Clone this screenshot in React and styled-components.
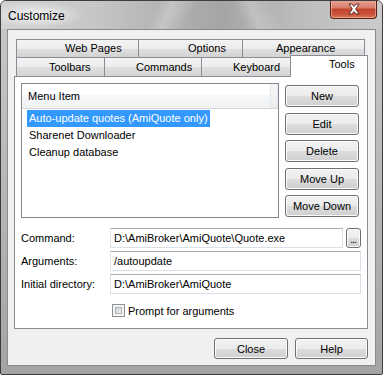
import React from 'react';
import styled, { createGlobalStyle } from 'styled-components';

const Global = createGlobalStyle`
    html, body {
        margin: 0;
        padding: 0;
        background: #ffffff;
    }
    body {
        font-family: "Liberation Sans", Arial, sans-serif;
        font-size: 11px;
        color: #000;
    }
    * { box-sizing: border-box; }
`

const Window = styled.div`
    width: 383px;
    height: 375px;
    border: 1px solid #3e3e3e;
    border-radius: 6px 6px 2px 2px;
    background: linear-gradient(#c9c9c9, #b3b3b3 60%, #a4a4a4);
    display: flex;
    flex-direction: column;
    overflow: hidden;
`

const TitleBar = styled.div`
    height: 28px;
    flex: none;
    display: flex;
    justify-content: space-between;
    padding-left: 7px;
    background:
        radial-gradient(ellipse 48px 13px at 36px 14px, rgba(255,255,255,0.75), rgba(255,255,255,0) 100%),
        linear-gradient(115deg, rgba(255,255,255,0) 40%, rgba(255,255,255,0.25) 44%, rgba(255,255,255,0) 50%),
        linear-gradient(65deg, rgba(255,255,255,0) 62%, rgba(255,255,255,0.22) 66%, rgba(255,255,255,0) 72%),
        linear-gradient(to right, #d2d2d2 0%, #c6c6c6 25%, #b0b0b0 45%, #a5a5a5 58%, #bcbcbc 78%, #cbcbcb 100%);
`

const Title = styled.div`
    align-self: center;
    font-size: 12px;
    line-height: 16px;
    padding-top: 1px;
`

const CloseButton = styled.div`
    width: 47px;
    height: 19px;
    margin-top: -1px;
    margin-right: 5px;
    border: 1px solid #5a1f15;
    border-top: none;
    border-radius: 0 0 4px 4px;
    background: linear-gradient(#e8a797 0%, #d77a66 45%, #c2432e 50%, #c9553c 80%, #d97a52 100%);
    box-shadow: inset 0 0 0 1px rgba(255,220,210,0.45);
    display: flex;
    align-items: center;
    justify-content: center;
`

const Client = styled.div`
    flex: 1;
    margin: 0 6px 8px 6px;
    border: 1px solid #8a8a8a;
    background: #f0f0f0;
    padding: 9px 7px 6px 6px;
    display: flex;
    flex-direction: column;
`

const TabRow = styled.div`
    display: flex;
    align-items: flex-end;
    height: ${p => p.$h}px;
    padding-left: 2px;
`

const Tab = styled.div`
    width: ${p => p.$w}px;
    height: ${p => p.$h}px;
    margin-left: ${p => p.$first ? 0 : -1}px;
    padding-left: ${p => p.$pad}px;
    border: 1px solid #898c95;
    border-bottom: none;
    background: linear-gradient(#f4f4f4 0%, #ececec 50%, #e0e0e0 50%, #d3d3d3 100%);
    line-height: ${p => p.$h - 1}px;
    white-space: nowrap;
`

const ActiveTab = styled(Tab)`
    position: relative;
    z-index: 2;
    margin-bottom: -1px;
    background: #ffffff;
    line-height: 17px;
`

const Panel = styled.div`
    height: 253px;
    flex: none;
    border: 1px solid #898c95;
    background: #ffffff;
    padding: 6px 6px 0 6px;
    display: flex;
    flex-direction: column;
`

const TopArea = styled.div`
    display: flex;
    gap: 6px;
`

const ListView = styled.div`
    width: 258px;
    height: 135px;
    border: 1px solid #828790;
    background: #fff;
`

const Header = styled.div`
    height: 25px;
    display: flex;
    border-bottom: 1px solid #d5d5d5;
    background: linear-gradient(#ffffff 0%, #ffffff 45%, #f6f7f9 45%, #f1f2f4 100%);
`

const HeaderCell = styled.div`
    width: ${p => p.$w}px;
    padding-left: 6px;
    line-height: 25px;
    border-right: 1px solid #e3e8ee;
`

const HeaderFill = styled.div`
    flex: 1;
    background: linear-gradient(#f8f8f8, #ececec);
    border-right: 1px solid #e3e8ee;
`

const Rows = styled.div`
    padding-top: 1px;
`

const Row = styled.div`
    height: 17px;
    padding-left: 5px;
`

const RowLabel = styled.span`
    display: inline-block;
    height: 17px;
    line-height: 17px;
    padding: 0 2px;
    background: ${p => p.$selected ? '#3399ff' : 'transparent'};
    color: ${p => p.$selected ? '#ffffff' : '#000000'};
`

const ButtonColumn = styled.div`
    display: flex;
    flex-direction: column;
    gap: 5.5px;
    padding-top: 2px;
`

const Button = styled.div`
    width: ${p => p.$w || 74}px;
    height: ${p => p.$h || 22}px;
    border: 1px solid #707070;
    border-radius: 3px;
    background: linear-gradient(#f2f2f2 0%, #ebebeb 50%, #dddddd 50%, #cfcfcf 100%);
    box-shadow: inset 0 0 0 1px #fbfbfb;
    display: flex;
    align-items: center;
    justify-content: center;
    white-space: nowrap;
`

const Form = styled.div`
    margin-top: 10px;
    display: grid;
    grid-template-columns: 89px 1fr;
    grid-auto-rows: 20px;
    row-gap: 3px;
    align-items: center;
`

const FieldLabel = styled.div`
    line-height: 20px;
    white-space: nowrap;
`

const FieldLine = styled.div`
    display: flex;
    gap: 3px;
`

const Input = styled.div`
    flex: 1;
    height: 20px;
    border: 1px solid #dbdfe6;
    border-top-color: #abadb3;
    border-left-color: #e2e3ea;
    padding-left: 3px;
    line-height: 18px;
    white-space: nowrap;
    overflow: hidden;
`

const BrowseButton = styled(Button)`
    align-items: flex-end;
    line-height: 14px;
    font-size: 10px;
    letter-spacing: -1px;
    padding-right: 1px;
`

const CheckLine = styled.div`
    margin-top: 10px;
    margin-left: 91px;
    display: flex;
    align-items: center;
    gap: 3px;
    height: 13px;
`

const CheckBox = styled.span`
    width: 13px;
    height: 13px;
    border: 1px solid #8e8f8f;
    background: #f4f4f4;
    padding: 2px;
    display: block;
`

const CheckInner = styled.span`
    display: block;
    width: 7px;
    height: 7px;
    background: linear-gradient(135deg, #cbcfd5, #f0f1f2);
    border: 1px solid #aeb3b9;
`

const Footer = styled.div`
    margin-top: 9px;
    display: flex;
    justify-content: flex-end;
    gap: 7px;
`

function CloseGlyph() {
    return (
        <svg width="14" height="12" viewBox="0 0 14 12">
            <path d="M2 1 L5 1 L7 3.5 L9 1 L12 1 L8.7 6 L12 11 L9 11 L7 8.5 L5 11 L2 11 L5.3 6 Z"
                fill="#ffffff" stroke="#4a1a12" strokeWidth="0.9" strokeLinejoin="round" />
        </svg>
    );
}

export default function App() {
    return (
        <>
            <Global />
            <Window>
                <TitleBar>
                    <Title>Customize</Title>
                    <CloseButton><CloseGlyph /></CloseButton>
                </TitleBar>
                <Client>
                    <TabRow $h={18}>
                        <Tab $first $w={123} $h={18} $pad={48}>Web Pages</Tab>
                        <Tab $w={105} $h={18} $pad={49}>Options</Tab>
                        <Tab $w={123} $h={18} $pad={33}>Appearance</Tab>
                    </TabRow>
                    <TabRow $h={19}>
                        <Tab $first $w={89} $h={19} $pad={32}>Toolbars</Tab>
                        <Tab $w={98} $h={19} $pad={31}>Commands</Tab>
                        <Tab $w={90} $h={19} $pad={31}>Keyboard</Tab>
                        <ActiveTab $w={78} $h={22} $pad={38}>Tools</ActiveTab>
                    </TabRow>
                    <Panel>
                        <TopArea>
                            <ListView>
                                <Header>
                                    <HeaderCell $w={249}>Menu Item</HeaderCell>
                                    <HeaderFill />
                                </Header>
                                <Rows>
                                    <Row><RowLabel $selected>Auto-update quotes (AmiQuote only)</RowLabel></Row>
                                    <Row><RowLabel>Sharenet Downloader</RowLabel></Row>
                                    <Row><RowLabel>Cleanup database</RowLabel></Row>
                                </Rows>
                            </ListView>
                            <ButtonColumn>
                                <Button>New</Button>
                                <Button>Edit</Button>
                                <Button>Delete</Button>
                                <Button>Move Up</Button>
                                <Button>Move Down</Button>
                            </ButtonColumn>
                        </TopArea>
                        <Form>
                            <FieldLabel>Command:</FieldLabel>
                            <FieldLine>
                                <Input>D:\AmiBroker\AmiQuote\Quote.exe</Input>
                                <BrowseButton $w={15} $h={20}>...</BrowseButton>
                            </FieldLine>
                            <FieldLabel>Arguments:</FieldLabel>
                            <FieldLine>
                                <Input>/autoupdate</Input>
                            </FieldLine>
                            <FieldLabel>Initial directory:</FieldLabel>
                            <FieldLine>
                                <Input>D:\AmiBroker\AmiQuote</Input>
                            </FieldLine>
                        </Form>
                        <CheckLine>
                            <CheckBox><CheckInner /></CheckBox>
                            <span>Prompt for arguments</span>
                        </CheckLine>
                    </Panel>
                    <Footer>
                        <Button $w={74} $h={21}>Close</Button>
                        <Button $w={73} $h={21}>Help</Button>
                    </Footer>
                </Client>
            </Window>
        </>
    );
}
